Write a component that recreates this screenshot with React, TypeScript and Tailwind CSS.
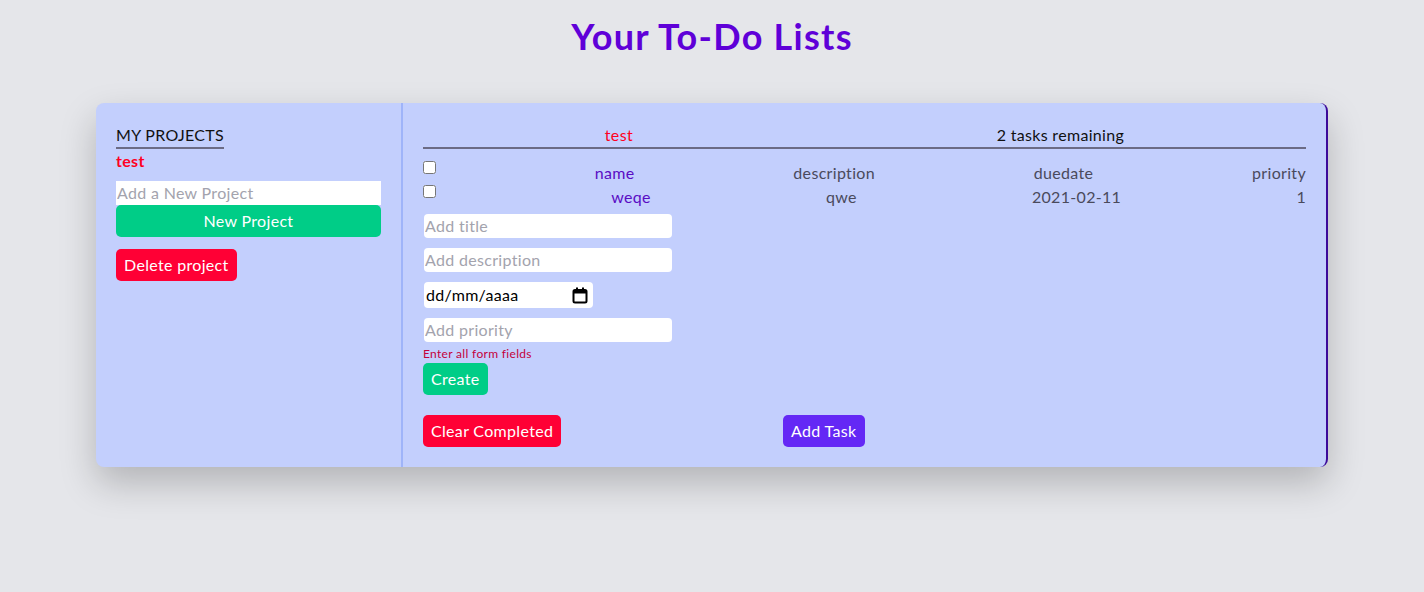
import { useState } from "react";

interface ITask {
  id: number;
  name: string;
  description: string;
  duedate: string;
  priority: string;
  done: boolean;
}

const CalendarIcon = () => (
  <svg width="16" height="17" viewBox="0 0 16 17" fill="none">
    <rect x="1.5" y="3" width="13" height="12.5" rx="1.5" stroke="#000" strokeWidth="2" />
    <rect x="1.5" y="3" width="13" height="3.5" fill="#000" />
    <rect x="4" y="0.5" width="2" height="3" fill="#000" />
    <rect x="10" y="0.5" width="2" height="3" fill="#000" />
  </svg>
);

const ProjectsPanel = () => {
  return (
    <div className="w-[307px] shrink-0 border-r-2 border-[#9fb4f9] pt-5 pl-5 pr-5">
      <span className="inline-block border-b-2 border-[#6b6b85] text-[#111]">
        MY PROJECTS
      </span>
      <p className="font-bold text-[#ff0022]">test</p>
      <input
        className="mt-2 block w-full bg-white h-6 px-px text-[#222] placeholder-[#a3a3ad] outline-none"
        placeholder="Add a New Project"
      />
      <button className="block w-full h-8 rounded-[5px] bg-[#00cd87] text-white">
        New Project
      </button>
      <button className="mt-3 h-8 px-2 rounded-[5px] bg-[#ff0035] text-white">
        Delete project
      </button>
    </div>
  );
};

const App = () => {
  const [tasks] = useState<ITask[]>([
    {
      id: 1,
      name: "weqe",
      description: "qwe",
      duedate: "2021-02-11",
      priority: "1",
      done: false,
    },
  ]);

  return (
    <div className="min-h-[592px] bg-[#e5e6ea] font-['Lato','Liberation_Sans',sans-serif] text-base leading-6 tracking-[0.02em]">
      <h1 className="pt-[14px] text-center text-[36px] leading-[44px] font-bold tracking-[0.035em] text-[#5f00d8]">
        Your To-Do Lists
      </h1>
      <div className="ml-[96px] mt-[45px] flex w-[1232px] rounded-lg border-r-2 border-[#3c0a99] bg-[#c3cffd] shadow-[0_16px_36px_rgba(0,0,0,0.22)]">
        <ProjectsPanel />
        <div className="flex-1 pt-5 pl-5 pr-5 pb-5">
          {/* header */}
          <div className="flex justify-around border-b-2 border-[#6b6b85]">
            <span className="text-[#ff0022]">test</span>
            <span className="text-[#111]">2 tasks remaining</span>
          </div>
          <div className="mt-3 flex items-start justify-between">
            <input type="checkbox" className="w-[13px] h-[13px]" />
            <span className="text-[#5a0cc4]">name</span>
            <span className="text-[#4a4a5c]">description</span>
            <span className="text-[#4a4a5c]">duedate</span>
            <span className="text-[#4a4a5c]">priority</span>
          </div>
          {tasks.map((task) => (
            <div className="flex items-start justify-between" key={task.id}>
              <input type="checkbox" className="w-[13px] h-[13px]" defaultChecked={task.done} />
              <span className="text-[#5a0cc4]">{task.name}</span>
              <span className="text-[#4a4a5c]">{task.description}</span>
              <span className="text-[#4a4a5c]">{task.duedate}</span>
              <span className="text-[#4a4a5c]">{task.priority}</span>
            </div>
          ))}
          {/* form */}
          <div className="mt-[5px] flex flex-col items-start">
            <input
              className="ml-px w-[248px] h-6 rounded bg-white px-px placeholder-[#a3a3ad] outline-none"
              placeholder="Add title"
            />
            <input
              className="ml-px mt-[10px] w-[248px] h-6 rounded bg-white px-px placeholder-[#a3a3ad] outline-none"
              placeholder="Add description"
            />
            <div className="ml-px mt-[10px] flex w-[169px] h-[26px] items-center justify-between rounded bg-white pl-[2px] pr-[5px] text-black">
              <span>dd/mm/aaaa</span>
              <CalendarIcon />
            </div>
            <input
              className="ml-px mt-[10px] w-[248px] h-6 rounded bg-white px-px placeholder-[#a3a3ad] outline-none"
              placeholder="Add priority"
            />
            <p className="mt-[4px] text-xs leading-4 text-[#c4003b]">Enter all form fields</p>
            <button className="mt-px h-8 px-2 rounded-[5px] bg-[#00cd87] text-white">
              Create
            </button>
          </div>
          <div className="mt-5 flex w-1/2 justify-between">
            <button className="h-8 px-2 rounded-[5px] bg-[#ff0035] text-white">
              Clear Completed
            </button>
            <button className="h-8 px-2 rounded-[5px] bg-[#6428f5] text-white">
              Add Task
            </button>
          </div>
        </div>
      </div>
    </div>
  );
};

export default App;
